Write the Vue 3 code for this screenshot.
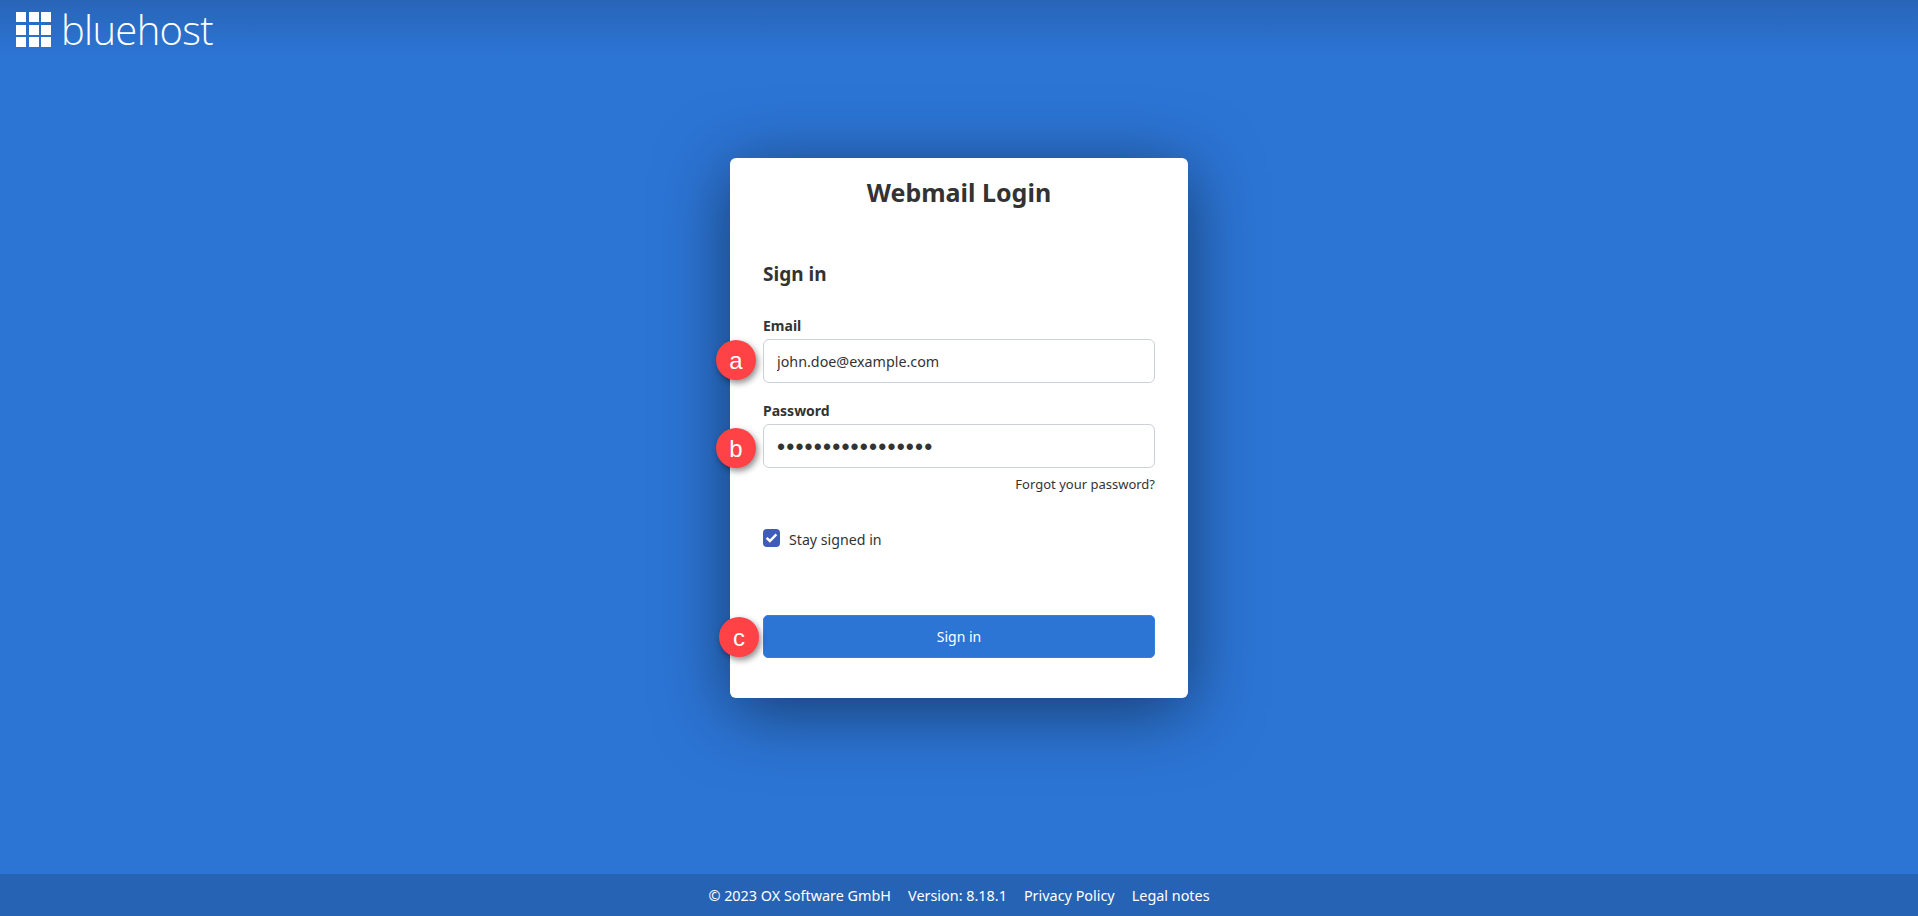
<script setup>
const footerItems = ['© 2023 OX Software GmbH', 'Version: 8.18.1', 'Privacy Policy', 'Legal notes']
const logoCells = Array.from({ length: 9 })
</script>

<template>
  <div class="page">
    <header class="topbar">
      <div class="logo">
        <div class="logo-grid"><span v-for="(c, i) in logoCells" :key="i"></span></div>
        <span class="logo-text">bluehost</span>
      </div>
    </header>
    <main class="main">
      <section class="card">
        <h1>Webmail Login</h1>
        <form class="form" @submit.prevent>
          <h2>Sign in</h2>
          <label class="field-label">Email</label>
          <div class="field">
            <span class="badge badge-a">a</span>
            <input type="text" value="john.doe@example.com" readonly />
          </div>
          <label class="field-label second">Password</label>
          <div class="field">
            <span class="badge badge-b">b</span>
            <input class="secret" type="password" value="xxxxxxxxxxxxxxxxx" readonly />
          </div>
          <div class="forgot"><a>Forgot your password?</a></div>
          <div class="stay">
            <span class="check">
              <svg viewBox="0 0 16 16" width="13" height="13"><path d="M2 8.5l4 3.8 8-8.2" fill="none" stroke="#fff" stroke-width="3" /></svg>
            </span>
            <span>Stay signed in</span>
          </div>
          <div class="field">
            <span class="badge badge-c">c</span>
            <button type="submit">Sign in</button>
          </div>
        </form>
      </section>
    </main>
    <footer class="footer">
      <span v-for="item in footerItems" :key="item">{{ item }}</span>
    </footer>
  </div>
</template>

<style>
html, body { margin: 0; padding: 0; }
</style>

<style scoped>
.page {
  height: 916px;
  display: flex;
  flex-direction: column;
  background: #2c75d5;
  font-family: "Noto Sans", "Open Sans", sans-serif;
  color: #333;
  overflow: hidden;
}
.topbar {
  height: 56px;
  flex: none;
  background: linear-gradient(to bottom, #2865b8, #2c75d5);
  display: flex;
  align-items: flex-start;
}
.logo {
  display: flex;
  align-items: flex-start;
  padding: 12px 0 0 16px;
  gap: 10px;
}
.logo-grid {
  display: grid;
  grid-template-columns: repeat(3, 10px);
  grid-template-rows: repeat(3, 10px);
  gap: 2.5px;
}
.logo-grid span { background: #fff; }
.logo-text {
  font-family: "Open Sans", sans-serif;
  font-weight: 300;
  font-size: 40px;
  line-height: 36px;
  color: #fff;
  letter-spacing: -0.7px;
}
.main {
  flex: 1;
  display: flex;
  justify-content: center;
  padding-top: 102px;
}
.card {
  width: 458px;
  height: 540px;
  box-sizing: border-box;
  background: #fff;
  border-radius: 6px;
  box-shadow: 0 12px 70px rgba(0, 0, 0, 0.5);
  padding: 16px 33px 0;
}
h1 {
  margin: 0;
  font-size: 25px;
  line-height: 36px;
  font-weight: 700;
  text-align: center;
  color: #333;
}
h2 {
  margin: 50px 0 0;
  font-size: 19px;
  line-height: 28px;
  font-weight: 700;
}
.form { display: flex; flex-direction: column; }
.field-label {
  margin-top: 27px;
  margin-bottom: 2px;
  font-size: 14px;
  line-height: 22px;
  font-weight: 700;
}
.field-label.second { margin-top: 17px; }
.field { position: relative; }
input {
  display: block;
  width: 100%;
  height: 44px;
  box-sizing: border-box;
  border: 1px solid #ccd0d8;
  border-radius: 6px;
  padding: 0 13px;
  font-family: inherit;
  font-size: 14.3px;
  color: #333;
  background: #fff;
  outline: none;
}
input.secret {
  font-family: "Liberation Sans", sans-serif;
  font-size: 23px;
  letter-spacing: 1.15px;
  padding-top: 2px;
}
.forgot {
  margin-top: 7px;
  text-align: right;
  font-size: 13px;
  line-height: 18px;
}
.stay {
  display: flex;
  align-items: center;
  gap: 9px;
  margin-top: 37px;
  font-size: 14.2px;
  line-height: 20px;
  margin-bottom: 65px;
}
.check {
  width: 17px;
  height: 18px;
  border-radius: 4px;
  background: #3f5cb8;
  display: flex;
  align-items: center;
  justify-content: center;
  margin-top: -5px;
}
button {
  display: block;
  width: 100%;
  height: 43px;
  border: 1px solid #3480e2;
  border-radius: 5px;
  background: #2c75d5;
  color: #fff;
  font-family: inherit;
  font-size: 14px;
}
.badge {
  position: absolute;
  width: 40px;
  height: 40px;
  border-radius: 50%;
  background: #ff4245;
  color: #fff;
  font-family: "Liberation Sans", sans-serif;
  font-size: 24px;
  line-height: 41px;
  text-align: center;
  box-shadow: 2px 3px 6px rgba(0, 0, 0, 0.45);
}
.badge-a { left: -47px; top: 1px; }
.badge-b { left: -47px; top: 4px; }
.badge-c { left: -44px; top: 2px; }
.footer {
  height: 42px;
  flex: none;
  background: #2763b5;
  color: #fff;
  font-size: 14.4px;
  display: flex;
  align-items: center;
  justify-content: center;
  gap: 17px;
}
</style>
